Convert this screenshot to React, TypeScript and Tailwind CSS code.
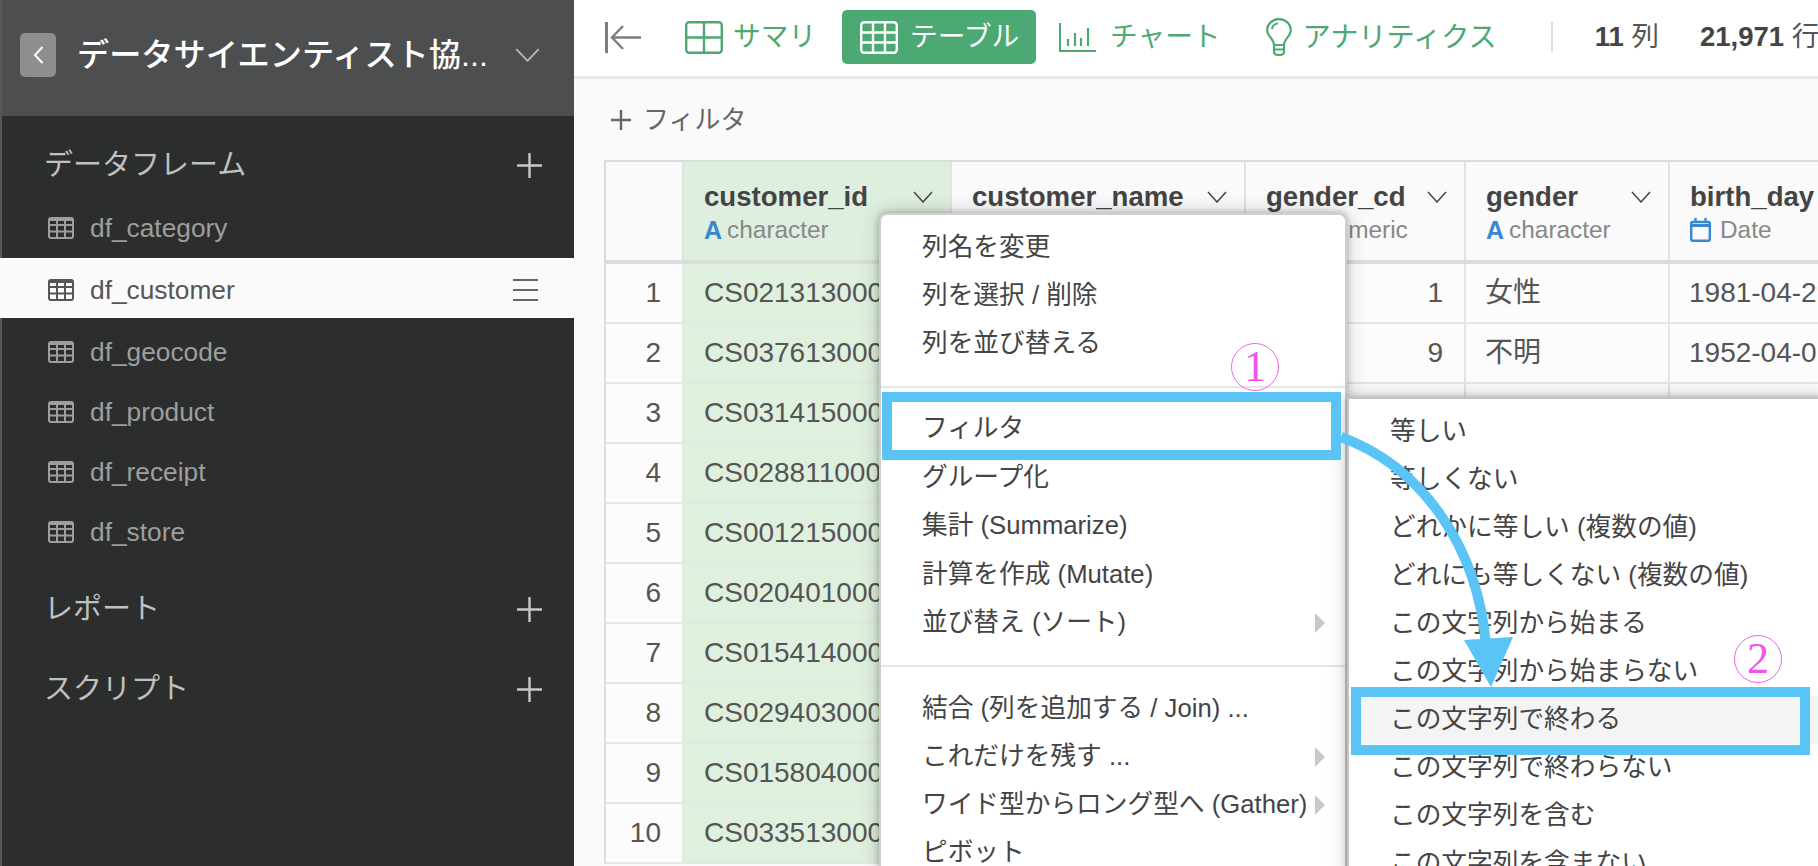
import React from "react";

const FONT = { fontFamily: '"Liberation Sans", "Noto Sans CJK JP", sans-serif' };

function TableIcon({ className }: { className?: string }) {
  return (
    <svg width="26" height="22" viewBox="0 0 26 22" fill="none" stroke="currentColor" strokeWidth="2" className={className}>
      <rect x="1" y="1" width="24" height="20" rx="2" />
      <path d="M1 2.5H25" strokeWidth="3" />
      <path d="M1 8H25M1 14.5H25M9 1V21M17 1V21" />
    </svg>
  );
}

function Plus() {
  return (
    <svg width="25" height="25" viewBox="0 0 25 25" stroke="#c8c8c8" strokeWidth="2.4">
      <path d="M0 12.5H25M12.5 0V25" />
    </svg>
  );
}

function Chevron({ className, w = 20, h = 12, sw = 1.5 }: { className?: string; w?: number; h?: number; sw?: number }) {
  return (
    <svg width={w} height={h} viewBox="0 0 20 12" fill="none" stroke="currentColor" strokeWidth={sw} className={className} preserveAspectRatio="none">
      <path d="M1 1L10 11L19 1" />
    </svg>
  );
}

function SideItem({ name, active, className }: { name: string; active?: boolean; className?: string }) {
  const base = "h-[60px] flex items-center pr-[36px] ";
  return (
    <div className={base + (active ? "-ml-[2px] pl-[48px] pt-[4px] bg-[#fafafa] text-[#555] " : "pl-[46px] text-[#9e9e9e] ") + (className ?? "")}>
      <TableIcon />
      <span className="ml-[16px] text-[26.3px] leading-none flex-1">{name}</span>
      {active && (
        <svg width="25" height="24" viewBox="0 0 25 24" stroke="#666" strokeWidth="2">
          <path d="M0 2H25M0 12H25M0 22H25" />
        </svg>
      )}
    </div>
  );
}

function Section({ title, className }: { title: string; className?: string }) {
  return (
    <div className={"flex items-center justify-between pl-[42px] pr-[32px] " + (className ?? "")}>
      <span className="text-[29px] text-[#c0c0c0] leading-none pt-[1px]">{title}</span>
      <Plus />
    </div>
  );
}

function Sidebar() {
  return (
    <aside className="w-[574px] h-full shrink-0 bg-[#2c2d2d] border-l-2 border-[#565758] flex flex-col">
      <div className="h-[116px] bg-[#4d4e50] flex items-center pl-[18px] pr-[34px] pb-[6px]">
        <div className="w-[36px] h-[44px] rounded-[5px] bg-[#8e8e8e] flex items-center justify-center">
          <svg width="11" height="18" viewBox="0 0 11 18" fill="none" stroke="#fff" strokeWidth="2">
            <path d="M9.5 1L2 9L9.5 17" />
          </svg>
        </div>
        <span className="ml-[21px] text-[32.2px] leading-none font-medium text-white flex-1 whitespace-nowrap">データサイエンティスト協...</span>
        <Chevron w={25} h={14} className="text-[#b5b5b5]" />
      </div>
      <Section title="データフレーム" className="mt-[16px] h-[66px]" />
      <SideItem name="df_category" />
      <SideItem name="df_customer" active />
      <SideItem name="df_geocode" className="mt-[4px]" />
      <SideItem name="df_product" />
      <SideItem name="df_receipt" />
      <SideItem name="df_store" />
      <Section title="レポート" className="mt-[13px] h-[68px]" />
      <Section title="スクリプト" className="mt-[12px] h-[68px]" />
    </aside>
  );
}

function Tab({ label, icon, active, gap, size = "text-[27.7px]" }: { label: string; icon: React.ReactNode; active?: boolean; gap: string; size?: string }) {
  return (
    <div className={active ? "h-[54px] w-[194px] shrink-0 flex items-center pl-[18px] rounded-[5px] bg-[#4ca973] text-white" : "h-[54px] shrink-0 flex items-center text-[#4ca973]"}>
      {icon}
      <span className={gap + " " + size + " leading-none whitespace-nowrap"}>{label}</span>
    </div>
  );
}

function TopBar() {
  return (
    <div className="h-[79px] shrink-0 bg-white border-b-[3px] border-[#e8e8e8] flex items-center pl-[31px] pb-[2px] whitespace-nowrap overflow-hidden">
      <svg width="36" height="31" viewBox="0 0 36 31" fill="none" stroke="#7d7d7d" strokeWidth="2.4" className="mr-[44px] shrink-0">
        <path d="M1.5 0V31" strokeWidth="3" />
        <path d="M36 15.5H8M18 4L7 15.5L18 27" />
      </svg>
      <div className="mr-[26px] shrink-0">
        <Tab
          label="サマリ"
          gap="ml-[10px]"
          icon={
            <svg width="38" height="33" viewBox="0 0 38 33" fill="none" stroke="currentColor" strokeWidth="2.4">
              <rect x="1.2" y="1.2" width="35.6" height="30.6" rx="3" />
              <path d="M19 1V32M1 16.5H37" />
            </svg>
          }
        />
      </div>
      <div className="mr-[23px] shrink-0">
        <Tab
          active
          label="テーブル"
          gap="ml-[12px]"
          icon={
            <svg width="38" height="33" viewBox="0 0 38 33" fill="none" stroke="currentColor" strokeWidth="2.4">
              <rect x="1.2" y="1.2" width="35.6" height="30.6" rx="3" />
              <path d="M1 11.5H37M1 21.5H37M13 1V32M25 1V32" />
            </svg>
          }
        />
      </div>
      <div className="mr-[45px] shrink-0">
        <Tab
          label="チャート"
          gap="ml-[14px]"
          icon={
            <svg width="37" height="29" viewBox="0 0 37 29" fill="none" stroke="currentColor" strokeWidth="2">
              <path d="M1 0V28H37" />
              <path d="M9 23V16M16 23V10M22 23V15M29 23V5" strokeWidth="2.2" />
            </svg>
          }
        />
      </div>
      <Tab
        label="アナリティクス"
        gap="ml-[11px]"
        size="text-[28.2px]"
        icon={
          <svg width="26" height="38" viewBox="0 0 26 38" fill="none" stroke="currentColor" strokeWidth="2.2">
            <path d="M8 27C8 21 1.2 18 1.2 12.5C1.2 6 6.5 1.2 13 1.2C19.5 1.2 24.8 6 24.8 12.5C24.8 18 18 21 18 27Z" />
            <path d="M8 27V34C8 36 10 37 13 37C16 37 18 36 18 34V27M8 31.5H18" />
            <path d="M6 11C6.5 8 9 5.5 12 5.5" />
          </svg>
        }
      />
      <div className="ml-[54px] w-[2px] h-[30px] bg-[#dcdcdc] shrink-0" />
      <div className="ml-[42px] shrink-0 text-[27.5px] leading-none text-[#555]">
        <b className="text-[#444]">11</b> 列
      </div>
      <div className="ml-[41px] shrink-0 text-[27.5px] leading-none text-[#555]">
        <b className="text-[#444]">21,971</b> 行
      </div>
    </div>
  );
}

function AIcon() {
  return <span className="font-bold text-[#3a87d0] text-[25px] leading-none mr-[5px]">A</span>;
}

function CalIcon() {
  return (
    <svg width="21" height="24" viewBox="0 0 21 24" fill="none" stroke="#3a87d0" strokeWidth="2.4" className="mr-[9px]">
      <rect x="1.2" y="4" width="18.6" height="18.8" rx="1.5" />
      <path d="M1 7.5H20" strokeWidth="3" />
      <path d="M5.5 0V5M15.5 0V5" />
    </svg>
  );
}

function HeaderCell({ name, type, icon, w, sel, chevron = true }: { name: string; type: string; icon: React.ReactNode; w: string; sel?: boolean; chevron?: boolean }) {
  return (
    <div className={`${w} shrink-0 h-[98px] border-r-2 border-[#e2e2e2] pl-[20px] pr-[17px] pt-[20px] ${sel ? "bg-[#dfefdf]" : "bg-[#fafafa]"}`}>
      <div className="flex items-center justify-between h-[30px]">
        <span className="font-bold text-[27.6px] leading-none text-[#444] whitespace-nowrap">{name}</span>
        {chevron && <Chevron className="text-[#444]" />}
      </div>
      <div className="flex items-center h-[30px] mt-[3px] text-[24.4px] leading-none text-[#888] whitespace-nowrap">
        {icon}
        {type}
      </div>
    </div>
  );
}

const ROWS = [
  ["CS021313000", "1", "女性", "1981-04-29"],
  ["CS037613000", "9", "不明", "1952-04-01"],
  ["CS031415000", "", "", ""],
  ["CS028811000", "", "", ""],
  ["CS001215000", "", "", ""],
  ["CS020401000", "", "", ""],
  ["CS015414000", "", "", ""],
  ["CS029403000", "", "", ""],
  ["CS015804000", "", "", ""],
  ["CS033513000", "", "", ""],
];

function DataTable() {
  return (
    <div className="ml-[30px] border-t-2 border-l-2 border-[#dcdcdc] text-[28px] leading-none text-[#555] overflow-hidden">
      <div className="flex border-b-4 border-[#dcdcdc]">
        <div className="w-[78px] shrink-0 h-[98px] bg-[#fafafa] border-r-2 border-[#e2e2e2]" />
        <HeaderCell sel w="w-[268px]" name="customer_id" type="character" icon={<AIcon />} />
        <HeaderCell w="w-[294px]" name="customer_name" type="character" icon={<AIcon />} />
        <HeaderCell w="w-[220px]" name="gender_cd" type="numeric" icon={<span className="font-bold text-[#3a87d0] w-[55px]">#</span>} />
        <HeaderCell w="w-[204px]" name="gender" type="character" icon={<AIcon />} />
        <HeaderCell w="flex-1" name="birth_day" type="Date" icon={<CalIcon />} chevron={false} />
      </div>
      {ROWS.map((r, i) => (
        <div key={i} className="flex h-[60px] border-b-2 border-[#e6e6e6] bg-[#fcfcfc]">
          <div className="w-[78px] shrink-0 border-r-2 border-[#e6e6e6] flex items-center justify-end pr-[21px]">{i + 1}</div>
          <div className="w-[268px] shrink-0 bg-[#dff0df] border-r-2 border-[#e6e6e6] flex items-center pl-[20px] whitespace-nowrap">{r[0]}</div>
          <div className="w-[294px] shrink-0 border-r-2 border-[#e6e6e6]" />
          <div className="w-[220px] shrink-0 border-r-2 border-[#e6e6e6] flex items-center justify-end pr-[21px]">{r[1]}</div>
          <div className="w-[204px] shrink-0 border-r-2 border-[#e6e6e6] flex items-center pl-[19px]">{r[2]}</div>
          <div className="flex-1 flex items-center pl-[19px] whitespace-nowrap">{r[3]}</div>
        </div>
      ))}
    </div>
  );
}

function MenuItem({ label, sub, hl, tall }: { label: string; sub?: boolean; hl?: boolean; tall?: boolean }) {
  return (
    <div className={`${tall ? "h-[48.5px]" : "h-[48px]"} flex items-center pl-[41px] pr-[20px] text-[25.7px] leading-none text-[#444] whitespace-nowrap ${hl ? "bg-[#f4f4f4]" : ""}`}>
      <span className="flex-1">{label}</span>
      {sub && (
        <svg width="10" height="20" viewBox="0 0 10 20" fill="#c8c8c8">
          <path d="M0 0L10 10L0 20Z" />
        </svg>
      )}
    </div>
  );
}

function Menus() {
  return (
    <>
      <div className="absolute left-[879px] top-[213px] w-[468px] h-[660px] bg-white border-2 border-[#cfcfcf] rounded-[8px] shadow-[0_0_6px_rgba(0,0,0,0.25),0_0_20px_rgba(0,0,0,0.2)] pt-[9px]">
        <MenuItem label="列名を変更" />
        <MenuItem label="列を選択 / 削除" />
        <MenuItem label="列を並び替える" />
        <div className="h-[2px] bg-[#e6e6e6] mt-[18px] mb-[17px]" />
        <MenuItem tall label="フィルタ" />
        <MenuItem tall label="グループ化" />
        <MenuItem tall label="集計 (Summarize)" />
        <MenuItem tall label="計算を作成 (Mutate)" />
        <MenuItem tall label="並び替え (ソート)" sub />
        <div className="h-[2px] bg-[#e6e6e6] mt-[17.5px] mb-[18px]" />
        <MenuItem label="結合 (列を追加する / Join) ..." />
        <MenuItem label="これだけを残す ..." sub />
        <MenuItem label="ワイド型からロング型へ (Gather)" sub />
        <MenuItem label="ピボット" />
      </div>
      <div className="absolute left-[1347px] top-[397px] w-[480px] h-[480px] bg-white border-l-2 border-t-2 border-[#c4c4c4] shadow-[0_0_6px_rgba(0,0,0,0.25),0_0_20px_rgba(0,0,0,0.2)] pt-[8.5px]">
        <MenuItem label="等しい" />
        <MenuItem label="等しくない" />
        <MenuItem label="どれかに等しい (複数の値)" />
        <MenuItem label="どれにも等しくない (複数の値)" />
        <MenuItem label="この文字列から始まる" />
        <MenuItem label="この文字列から始まらない" />
        <MenuItem label="この文字列で終わる" hl />
        <MenuItem label="この文字列で終わらない" />
        <MenuItem label="この文字列を含む" />
        <MenuItem label="この文字列を含まない" />
      </div>
    </>
  );
}

function Annotations() {
  const circle =
    "absolute w-[48px] h-[48px] rounded-full border border-[#ee66ee] flex items-center justify-center text-[44px] leading-none text-[#ee55ee]";
  const serif = { fontFamily: '"Liberation Serif", serif' };
  return (
    <>
      <div className="absolute left-[882px] top-[392px] w-[459px] h-[68px] border-[10px] border-[#5bc4f7]" />
      <div className="absolute left-[1351px] top-[687px] w-[459px] h-[68px] border-[10px] border-[#5bc4f7]" />
      <svg className="absolute left-0 top-0 pointer-events-none" width="1818" height="866" fill="none">
        <path d="M1341 437C1425 468 1478 550 1486 645" stroke="#5bc4f7" strokeWidth="10" />
        <path d="M1464 640L1513 637L1491 687Z" fill="#5bc4f7" />
      </svg>
      <div className={circle + " left-[1231px] top-[343px]"} style={serif}>
        1
      </div>
      <div className={circle + " left-[1734px] top-[635px]"} style={serif}>
        2
      </div>
    </>
  );
}

export default function App() {
  return (
    <div className="relative w-[1818px] h-[866px] overflow-hidden flex bg-[#fafafa]" style={FONT}>
      <Sidebar />
      <main className="flex-1 min-w-0 flex flex-col">
        <TopBar />
        <div className="h-[81px] shrink-0 flex items-center pl-[37px] text-[#666]">
          <svg width="20" height="20" viewBox="0 0 20 20" stroke="#666" strokeWidth="2.4">
            <path d="M0 10H20M10 0V20" />
          </svg>
          <span className="ml-[12px] text-[26px] leading-none">フィルタ</span>
        </div>
        <DataTable />
      </main>
      <Menus />
      <Annotations />
    </div>
  );
}
